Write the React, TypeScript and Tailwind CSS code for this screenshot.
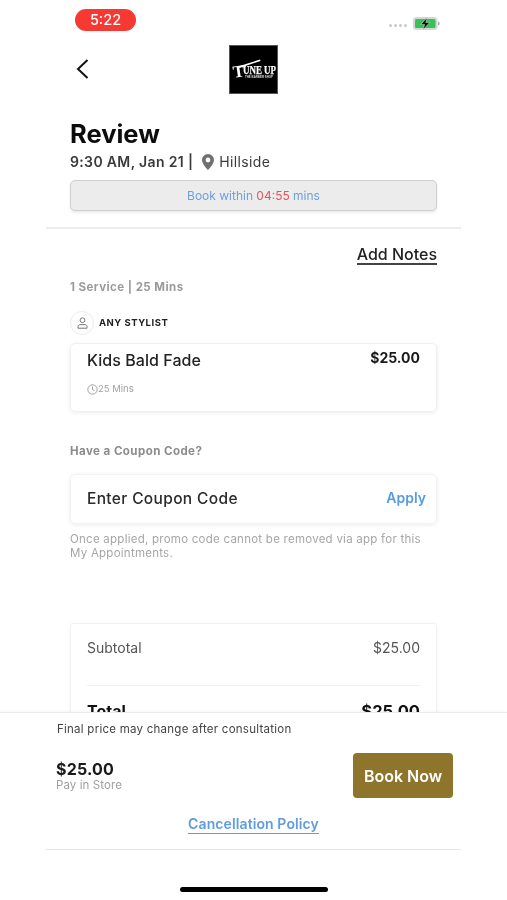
import React from "react";

function Battery() {
  return (
    <svg width="27" height="13" viewBox="0 0 27 13" className="block">
      <rect x="0" y="0" width="24.5" height="13" rx="3.5" fill="#d4d7d4" />
      <rect x="2" y="2" width="20.5" height="9" rx="1.5" fill="#35c257" />
      <path d="M25 4.5c1.2.3 1.6 1.1 1.6 2s-.4 1.7-1.6 2z" fill="#a9aca9" />
      <path d="M14.4 0.4 7.6 7.4h4l-1.6 5.4 6.8-7.4h-4z" fill="#0d0d0d" stroke="#e3f5e7" strokeWidth="0.5" />
    </svg>
  );
}

function Logo() {
  return (
    <div className="w-[49px] h-[49px] bg-black border border-[#555] flex items-center justify-center">
      <svg width="47" height="47" viewBox="0 0 47 47">
        <path d="M8 20.5 30 13.6l.5 1.3-21 7z" fill="#fff" />
        <text x="3" y="31" transform="rotate(-8 8 26)" fontFamily="'Liberation Serif', serif" fontWeight="700" fontSize="17" fill="#fff">T</text>
        <text x="13" y="28" textLength="33" lengthAdjust="spacingAndGlyphs" fontFamily="'Liberation Serif', serif" fontWeight="700" fontSize="11.5" fill="#fff" stroke="#fff" strokeWidth="0.25">UNE UP</text>
        <text x="15" y="32" textLength="28" lengthAdjust="spacingAndGlyphs" fontFamily="'Liberation Sans', sans-serif" fontWeight="700" fontSize="3" fill="#ddd">THE BARBER SHOP</text>
      </svg>
    </div>
  );
}

export default function App() {
  return (
    <div className="w-[507px] h-[900px] bg-white overflow-hidden flex flex-col text-[#1c1c1e] font-['Inter',sans-serif] blur-[0.45px]">
      <div className="h-[712px] overflow-hidden shrink-0">
        {/* status bar */}
        <div className="h-[45px] pl-[75px] pr-[67px] pt-[9px] flex justify-between items-start">
          <div className="w-[61px] h-[22px] rounded-full bg-[#f63a33] text-white text-[14.5px] font-medium flex items-center justify-center leading-none">
            5:22
          </div>
          <div className="flex items-center gap-[6px] mt-[8px]">
            <div className="flex gap-[2px] mt-[4px]">
              <span className="w-[3px] h-[3px] rounded-full bg-[#c9c9c9]" />
              <span className="w-[3px] h-[3px] rounded-full bg-[#c9c9c9]" />
              <span className="w-[3px] h-[3px] rounded-full bg-[#c9c9c9]" />
              <span className="w-[3px] h-[3px] rounded-full bg-[#c9c9c9]" />
            </div>
            <Battery />
          </div>
        </div>

        {/* header */}
        <div className="h-[49px] flex items-center pl-[76px]">
          <svg width="13" height="20" viewBox="0 0 13 20" fill="none" className="block -mt-[1px]">
            <path d="M11.5 1 2 10l9.5 9" stroke="#111" strokeWidth="2" />
          </svg>
          <div className="ml-[140px]">
            <Logo />
          </div>
        </div>

        {/* title */}
        <div className="pl-[70px] pr-[70px] pt-[24px]">
          <h1 className="text-[25.5px] leading-[32px] font-bold text-[#0c0c0c]">Review</h1>
          <div className="flex items-center text-[14px] leading-[20px] mt-[2px] text-[#3a3a3a] tracking-[0.35px]">
            <span className="font-semibold">9:30 AM, Jan 21 |</span>
            <svg width="12" height="16" viewBox="0 0 12 16" className="ml-[9px] mr-[5px]">
              <path fillRule="evenodd" d="M6 0a6 6 0 0 0-6 6c0 4 6 10 6 10s6-6 6-10a6 6 0 0 0-6-6zm0 3.6a2.4 2.4 0 1 1 0 4.8 2.4 2.4 0 0 1 0-4.8z" fill="#6f6f6f" />
            </svg>
            <span>Hillside</span>
          </div>
          <div className="mt-[8px] h-[31px] rounded-[5px] bg-[#ececec] border border-[#cfcfcf] shadow-[0_2px_3px_rgba(0,0,0,0.08)] flex items-center justify-center text-[12px] text-[#6d9fdc]">
            <span>Book within&nbsp;</span>
            <span className="text-[#e4545a]">04:55</span>
            <span>&nbsp;mins</span>
          </div>
        </div>

        <div className="mt-[16px] ml-[46px] w-[415px] h-[2px] bg-[#ececec]" />

        {/* body */}
        <div className="pl-[70px] pr-[70px]">
          <div className="flex justify-end mt-[16px]">
            <span className="text-[16px] leading-[18px] font-medium text-[#222] border-b-2 border-[#444]">Add Notes</span>
          </div>
          <div className="mt-[14px] text-[11.5px] leading-[16px] font-bold text-[#9a9a9a] tracking-[0.45px]">1 Service | 25 Mins</div>

          <div className="flex items-center mt-[16px]">
            <div className="w-[24px] h-[24px] rounded-full border border-[#ececec] flex items-center justify-center">
              <svg width="11" height="12" viewBox="0 0 11 12" fill="none" stroke="#777" strokeWidth="1">
                <circle cx="5.5" cy="3.2" r="2.4" />
                <path d="M1 11.2V9.6c0-1.2 1-2 2-2h5c1 0 2 .8 2 2v1.6z" />
              </svg>
            </div>
            <span className="ml-[5px] text-[9.5px] font-bold tracking-[0.5px] text-[#222]">ANY STYLIST</span>
          </div>

          <div className="mt-[8px] h-[69px] rounded-[5px] border border-[#f0f0f0] shadow-[0_1px_4px_rgba(0,0,0,0.08)] pl-[16px] pr-[16px] pt-[5px]">
            <div className="flex justify-between items-start">
              <span className="text-[16px] leading-[22px] font-medium text-[#222] tracking-[0.05px]">Kids Bald Fade</span>
              <span className="text-[14px] leading-[18px] font-bold text-[#1a1a1a]">$25.00</span>
            </div>
            <div className="flex items-center mt-[11px] text-[9.5px] leading-[14px] text-[#a2a2a2]">
              <svg width="11" height="11" viewBox="0 0 11 11" fill="none" stroke="#999" strokeWidth="0.9">
                <circle cx="5.5" cy="5.5" r="4.7" />
                <path d="M5.5 2.6v3l2 1.2" />
              </svg>
              <span>25 Mins</span>
            </div>
          </div>

          <div className="mt-[31px] text-[11.5px] leading-[16px] font-bold text-[#8b8b8b] tracking-[0.45px]">Have a Coupon Code?</div>

          <div className="mt-[15px] h-[50px] rounded-[5px] border border-[#f2f2f2] shadow-[0_1px_4px_rgba(0,0,0,0.08)] pl-[16px] pr-[10px] flex items-center justify-between">
            <span className="text-[15.5px] font-medium text-[#2a2a2a] tracking-[0.35px]">Enter Coupon Code</span>
            <span className="text-[14px] leading-[18px] font-semibold text-[#5a9ae0] pb-[2px]">Apply</span>
          </div>

          <p className="mt-[8px] w-[355px] text-[11.5px] leading-[14px] text-[#a6a6a6] tracking-[0.25px]">
            Once applied, promo code cannot be removed via app for this My Appointments.
          </p>

          <div className="mt-[63px] h-[140px] rounded-[3px] border border-[#f2f2f2] shadow-[0_1px_4px_rgba(0,0,0,0.05)] px-[16px] pt-[14px]">
            <div className="flex justify-between text-[14px] leading-[20px] text-[#555]">
              <span>Subtotal</span>
              <span>$25.00</span>
            </div>
            <div className="mt-[27px] h-px bg-[#f0f0f0]" />
            <div className="mt-[15px] flex justify-between font-bold text-[#111]">
              <span className="text-[16px] leading-[20px]">Total</span>
              <span className="text-[16.5px] leading-[20px]">$25.00</span>
            </div>
          </div>
        </div>
      </div>

      {/* bottom panel */}
      <div className="flex-1 border-t border-[#ededed] shadow-[0_-1px_3px_rgba(0,0,0,0.03)] relative bg-white">
        <div className="pl-[57px] pt-[9px] text-[11.5px] leading-[14px] text-[#444] tracking-[0.25px]">Final price may change after consultation</div>
        <div className="mt-[17px] pl-[56px] pr-[54px] flex items-center justify-between">
          <div>
            <div className="text-[16px] leading-[18px] font-bold tracking-[0.2px] text-[#1a1a1a]">$25.00</div>
            <div className="text-[11.5px] leading-[14px] text-[#a0a0a0] tracking-[0.1px]">Pay in Store</div>
          </div>
          <div className="w-[100px] h-[45px] rounded-[4px] bg-[#8f742b] text-white text-[16px] font-semibold flex items-center justify-center">
            Book Now
          </div>
        </div>
        <div className="mt-[17px] flex justify-center">
          <span className="text-[14px] leading-[18px] font-semibold text-[#5f9ce2] border-b border-[#5f9ce2] tracking-[0.1px]">Cancellation Policy</span>
        </div>
        <div className="mt-[15px] ml-[46px] w-[415px] h-px bg-[#e6e6e6]" />
        <div className="mt-[37px] ml-[180px] w-[148px] h-[5px] rounded-full bg-black" />
      </div>
    </div>
  );
}
